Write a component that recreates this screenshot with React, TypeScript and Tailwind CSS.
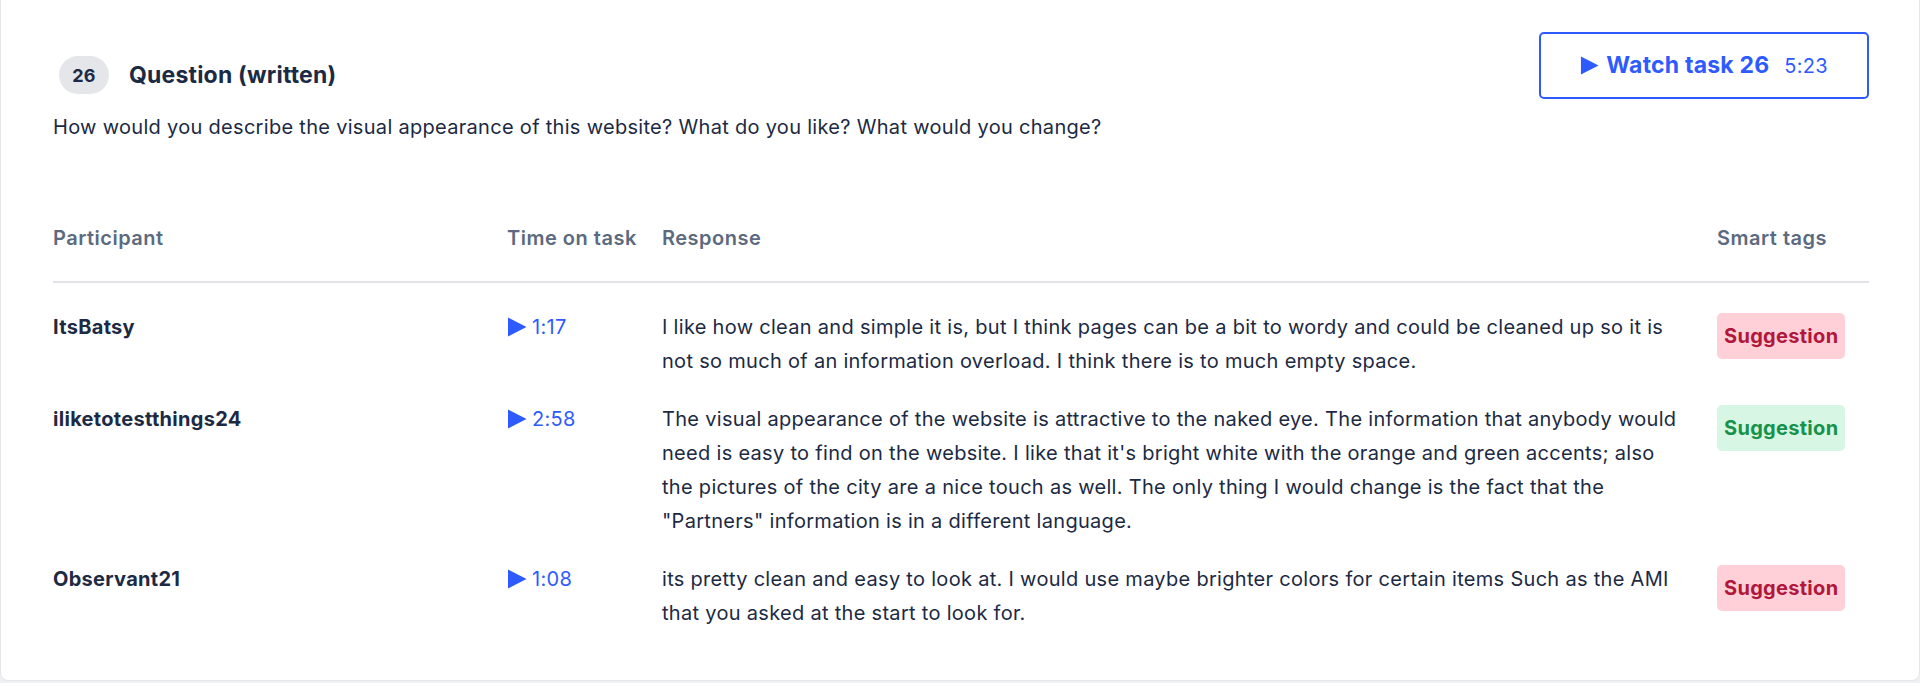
const rows = [
  {
    name: "ItsBatsy",
    time: "1:17",
    response:
      "I like how clean and simple it is, but I think pages can be a bit to wordy and could be cleaned up so it is not so much of an information overload. I think there is to much empty space.",
    tone: "red",
  },
  {
    name: "iliketotestthings24",
    time: "2:58",
    response:
      "The visual appearance of the website is attractive to the naked eye. The information that anybody would need is easy to find on the website. I like that it's bright white with the orange and green accents; also the pictures of the city are a nice touch as well. The only thing I would change is the fact that the \"Partners\" information is in a different language.",
    tone: "green",
  },
  {
    name: "Observant21",
    time: "1:08",
    response:
      "its pretty clean and easy to look at. I would use maybe brighter colors for certain items Such as the AMI that you asked at the start to look for.",
    tone: "red",
  },
];

function Play({ className }: { className: string }) {
  return (
    <svg viewBox="0 0 20 20" className={className} fill="currentColor">
      <path d="M1 0.5 L19.5 10 L1 19.5 Z" />
    </svg>
  );
}

export default function App() {
  return (
    <div className="min-h-screen bg-[#eef0f3] pb-[3px] font-['Inter',sans-serif] tracking-[0.3px] text-[#1c2a44]">
      <div className="rounded-b-lg border border-t-0 border-[#e4e6ea] bg-white pl-[52px] pr-[50px] pt-[32px] pb-[38px]">
        {/* Header */}
        <div className="flex items-start justify-between">
          <div className="pt-[24px]">
            <div className="flex items-center">
              <span className="ml-[6px] flex h-[38px] w-[50px] items-center justify-center rounded-full bg-[#e4e6ea] text-[18px] font-bold">
                26
              </span>
              <h2 className="ml-[20px] text-[23px] font-bold leading-[28px] tracking-[0.2px]">Question (written)</h2>
            </div>
            <p className="mt-[16px] text-[20px] leading-[34px]">
              How would you describe the visual appearance of this website? What do you like? What would you change?
            </p>
          </div>
          <button className="flex h-[67px] items-center rounded-[5px] border-2 border-[#2e5bff] px-[39px] text-[#2e5bff]">
            <Play className="h-[19px] w-[19px]" />
            <span className="ml-[7px] text-[23px] font-bold tracking-[0.2px]">Watch task 26</span>
            <span className="ml-[15px] text-[20px]">5:23</span>
          </button>
        </div>

        {/* Table */}
        <div className="mt-[80px]">
          <div className="grid grid-cols-[454px_155px_1fr_152px] border-b-2 border-[#e1e3e8] pb-[29px] text-[20px] font-semibold leading-[28px] tracking-[0.5px] text-[#5b6a80]">
            <div>Participant</div>
            <div>Time on task</div>
            <div>Response</div>
            <div>Smart tags</div>
          </div>
          <div className="pt-[15px]">
            {rows.map((r) => (
              <div key={r.name} className="grid grid-cols-[454px_155px_1fr_152px] py-[12px] text-[20px] leading-[34px]">
                <div className="font-bold">{r.name}</div>
                <div className="flex h-[34px] items-center text-[#2e5bff]">
                  <Play className="h-[20px] w-[20px]" />
                  <span className="ml-[5px]">{r.time}</span>
                </div>
                <div className="pr-[30px]">{r.response}</div>
                <div>
                  <span
                    className={`mt-[3px] inline-flex h-[46px] items-center rounded-[5px] px-[7px] text-[20px] font-bold ${
                      r.tone === "red" ? "bg-[#ffd0d8] text-[#b0173b]" : "bg-[#d7f6e4] text-[#16924a]"
                    }`}
                  >
                    Suggestion
                  </span>
                </div>
              </div>
            ))}
          </div>
        </div>
      </div>
    </div>
  );
}
